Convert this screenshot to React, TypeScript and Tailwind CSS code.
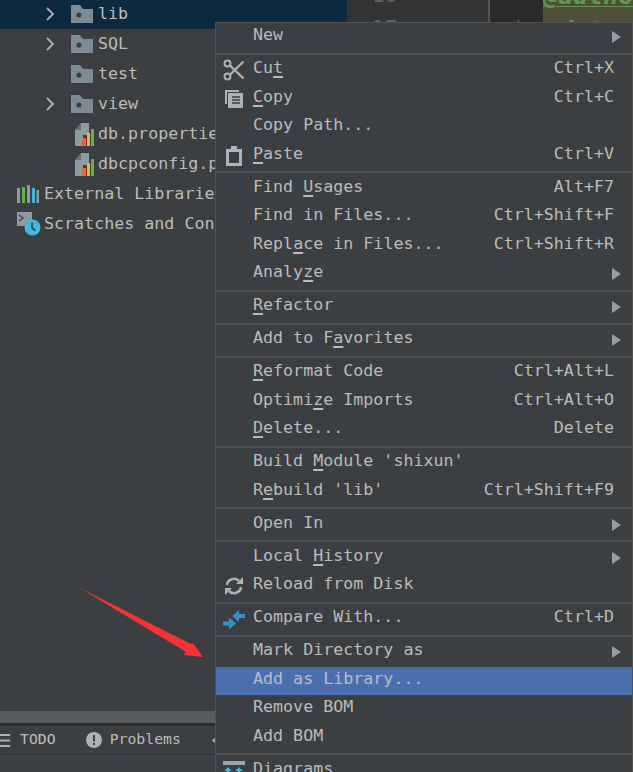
import React from "react";

const mono = "font-['DejaVu_Sans_Mono','Liberation_Mono',monospace]";

type Entry = {
  label: string;
  mn?: number;
  keys?: string;
  sub?: boolean;
  icon?: React.ReactNode;
  active?: boolean;
};

function Scissors() {
  return (
    <svg width="22" height="22" viewBox="0 0 22 22" fill="none" stroke="#afb1b3">
      <circle cx="4.500" cy="4.500" r="3" strokeWidth="2" />
      <circle cx="4.500" cy="17.500" r="3" strokeWidth="2" />
      <path d="M7 6.500L20.500 19.500M7 15.500L20.500 2.500" strokeWidth="2.400" />
    </svg>
  );
}

function CopyIcon() {
  return (
    <svg width="20" height="20" viewBox="0 0 20 20">
      <path d="M1 1h14v2H3v12H1z" fill="#afb1b3" />
      <path d="M4 4h15v15H4z" fill="#afb1b3" />
      <path d="M8 8h8M8 11h8M8 14h8" stroke="#3c3f41" strokeWidth="1.400" />
    </svg>
  );
}

function PasteIcon() {
  return (
    <svg width="18" height="20" viewBox="0 0 18 20">
      <path d="M1 3h16v17H1z" fill="#afb1b3" />
      <path d="M4 6h10v11H4z" fill="#3c3f41" />
      <path d="M6 0h6v5H6z" fill="#afb1b3" />
    </svg>
  );
}

function ReloadIcon() {
  return (
    <svg width="20" height="20" viewBox="0 0 20 20" fill="none">
      <path d="M3 9a7 7 0 0 1 12-4" stroke="#afb1b3" strokeWidth="2.600" />
      <path d="M12 8h7V1z" fill="#afb1b3" />
      <path d="M17 11a7 7 0 0 1-12 4" stroke="#afb1b3" strokeWidth="2.600" />
      <path d="M8 12H1v7z" fill="#afb1b3" />
    </svg>
  );
}

function CompareIcon() {
  return (
    <svg width="22" height="21" viewBox="0 0 22 21">
      <path d="M22 5h-6V1L9 7l7 6V9h6z" fill="#3592c4" />
      <path d="M0 12.500h6v-4l7 6-7 6v-4H0z" fill="#3592c4" />
    </svg>
  );
}

function DiagramIcon() {
  return (
    <svg width="22" height="14" viewBox="0 0 22 14" className="-mt-[6px]">
      <path d="M0 0h22v4H0z" fill="#9aa7b0" />
      <path d="M5 6l-3.500 4H4v4h2v-4h2.500zM16 6l-3.500 4H15v4h2v-4h2.500z" fill="#40b6e0" />
    </svg>
  );
}

function FolderIcon() {
  return (
    <svg width="22" height="18" viewBox="0 0 22 18">
      <path d="M0 0h9l3 4h10v14H0z" fill="#7f8b93" />
      <circle cx="8" cy="10" r="2.600" fill="#3c3f41" />
    </svg>
  );
}

function PropsIcon() {
  return (
    <svg width="20" height="23" viewBox="0 0 20 23" className="ml-[3px]">
      <path d="M1 7l6-7h8v12H9v11H1z" fill="#8f9ba3" />
      <path d="M1 7h6V0z" fill="#3c3f41" opacity="0.500" />
      <path d="M8 15h4v8H8z" fill="#f26522" />
      <path d="M13 10h3v13h-3z" fill="#f4af3d" />
      <path d="M17 6h3v17h-3z" fill="#62b543" />
    </svg>
  );
}

function LibsIcon() {
  return (
    <svg width="22" height="19" viewBox="0 0 22 19">
      <path d="M0 3h3v15H0z" fill="#8f9ba3" />
      <path d="M5 2h3v16H5z" fill="#62b543" />
      <path d="M10 0h3v18h-3z" fill="#8f9ba3" />
      <path d="M15 3h3v15h-3z" fill="#40b6e0" />
      <path d="M19.500 5h2.500v13h-2.500z" fill="#8f9ba3" />
    </svg>
  );
}

function ScratchIcon() {
  return (
    <svg width="24" height="24" viewBox="0 0 24 24">
      <path d="M0 0h15v14H0z" fill="#8f9ba3" />
      <path d="M2 3l4 3-4 3" fill="none" stroke="#3c3f41" strokeWidth="1.300" />
      <circle cx="15.500" cy="15.500" r="8" fill="#40b6e0" />
      <path d="M15 10.500v5.500l3.500 2.500" fill="none" stroke="#3c3f41" strokeWidth="1.600" />
    </svg>
  );
}

function TreeRow({
  label,
  indent,
  icon,
  chevron,
  selected,
}: {
  label: string;
  indent: string;
  icon: React.ReactNode;
  chevron?: boolean;
  selected?: boolean;
}) {
  return (
    <div className={`flex h-[30px] items-center whitespace-nowrap ${selected ? "bg-[#0d293e]" : ""} ${indent}`}>
      {chevron !== undefined && (
        <span className="flex w-[25px] shrink-0 items-center">
          {chevron && (
            <svg width="9" height="14" viewBox="0 0 9 14" fill="none">
              <path d="M1 1l6 6-6 6" stroke="#afb1b3" strokeWidth="1.800" />
            </svg>
          )}
        </span>
      )}
      <span className="flex w-[27px] shrink-0 items-center">{icon}</span>
      <span className="pb-[2px]">{label}</span>
    </div>
  );
}

const groups: Entry[][] = [
  [{ label: "New", sub: true }],
  [
    { label: "Cut", mn: 2, keys: "Ctrl+X", icon: <Scissors /> },
    { label: "Copy", mn: 0, keys: "Ctrl+C", icon: <CopyIcon /> },
    { label: "Copy Path..." },
    { label: "Paste", mn: 0, keys: "Ctrl+V", icon: <PasteIcon /> },
  ],
  [
    { label: "Find Usages", mn: 5, keys: "Alt+F7" },
    { label: "Find in Files...", keys: "Ctrl+Shift+F" },
    { label: "Replace in Files...", mn: 4, keys: "Ctrl+Shift+R" },
    { label: "Analyze", mn: 5, sub: true },
  ],
  [{ label: "Refactor", mn: 0, sub: true }],
  [{ label: "Add to Favorites", mn: 8, sub: true }],
  [
    { label: "Reformat Code", mn: 0, keys: "Ctrl+Alt+L" },
    { label: "Optimize Imports", mn: 6, keys: "Ctrl+Alt+O" },
    { label: "Delete...", mn: 0, keys: "Delete" },
  ],
  [
    { label: "Build Module 'shixun'", mn: 6 },
    { label: "Rebuild 'lib'", mn: 1, keys: "Ctrl+Shift+F9" },
  ],
  [{ label: "Open In", sub: true }],
  [
    { label: "Local History", mn: 6, sub: true },
    { label: "Reload from Disk", icon: <ReloadIcon /> },
  ],
  [{ label: "Compare With...", keys: "Ctrl+D", icon: <CompareIcon /> }],
  [
    { label: "Mark Directory as", sub: true },
    { label: "Add as Library...", active: true },
    { label: "Remove BOM" },
    { label: "Add BOM" },
  ],
  [{ label: "Diagrams", icon: <DiagramIcon /> }],
];

function Label({ text, mn }: { text: string; mn?: number }) {
  if (mn === undefined) return <span>{text}</span>;
  return (
    <span>
      {text.slice(0, mn)}
      <span className="underline decoration-2 underline-offset-[3px]">{text[mn]}</span>
      {text.slice(mn + 1)}
    </span>
  );
}

function MenuRow({ entry }: { entry: Entry }) {
  return (
    <div
      className={`relative flex h-[28.5px] items-center whitespace-nowrap pb-[5px] pl-[37px] pr-[18px] ${
        entry.active ? "bg-[#4b6eaf]" : ""
      }`}
    >
      {entry.icon && (
        <span className="absolute left-[6px] top-0 flex h-full w-[24px] items-center justify-center">{entry.icon}</span>
      )}
      <Label text={entry.label} mn={entry.mn} />
      {entry.keys && <span className="ml-auto">{entry.keys}</span>}
      {entry.sub && (
        <svg width="9" height="12" viewBox="0 0 9 12" className="absolute right-[11px] top-[8px]">
          <path d="M0 0l9 6-9 6z" fill="#9a9c9e" />
        </svg>
      )}
    </div>
  );
}

export default function App() {
  return (
    <div className={`relative flex h-[772px] w-[633px] flex-col overflow-hidden bg-[#3c3f41] text-[16.67px] text-[#bbbbbb] ${mono}`}>
      {/* project tree + editor behind the menu */}
      <div className="flex h-[711px] shrink-0">
        <div className="w-[347px] shrink-0 -mt-px">
          <TreeRow label="lib" indent="pl-[46px]" chevron selected icon={<FolderIcon />} />
          <TreeRow label="SQL" indent="pl-[46px]" chevron icon={<FolderIcon />} />
          <TreeRow label="test" indent="pl-[46px]" chevron={false} icon={<FolderIcon />} />
          <TreeRow label="view" indent="pl-[46px]" chevron icon={<FolderIcon />} />
          <TreeRow label="db.properties" indent="pl-[71px]" icon={<PropsIcon />} />
          <TreeRow label="dbcpconfig.properties" indent="pl-[71px]" icon={<PropsIcon />} />
          <TreeRow label="External Libraries" indent="pl-[17px]" icon={<LibsIcon />} />
          <TreeRow label="Scratches and Consoles" indent="pl-[17px]" icon={<ScratchIcon />} />
        </div>
        <div className="h-[22px] w-[141px] shrink-0 overflow-hidden bg-[#313335] pl-[25px] text-[21px] text-[#606366]">
          <div className="-mt-[20px] leading-[30px]">16</div>
          <div className="mt-[4px] leading-[30px]">17</div>
        </div>
        <div className="h-[22px] w-[55px] shrink-0 overflow-hidden border-l-2 border-[#555555] bg-[#2b2b2b] pl-[22px] text-[21px] leading-[30px] text-[#62803f]">
          <div className="mt-[14px]">*</div>
        </div>
        <div className="h-[22px] flex-1 overflow-hidden bg-[#4f4f3a] text-[25px] font-bold italic text-[#629755]">
          <div className="-mt-[19px] leading-[30px] underline decoration-1 underline-offset-[2px]">@author</div>
          <div className="mt-[5px] leading-[30px]">@date</div>
        </div>
      </div>

      <div className="h-[12px] shrink-0 bg-[#595b5d]" />
      <div className="h-[3px] shrink-0 bg-[#2b2b2b]" />
      <div className="flex h-[29px] shrink-0 items-center border-b border-[#323232] text-[14.8px]">
        <svg width="10" height="13" viewBox="0 0 10 13" className="shrink-0">
          <path d="M0 1h10M0 6.500h10M0 12h10" stroke="#afb1b3" strokeWidth="2.200" />
        </svg>
        <span className="ml-[10px] pb-[2px]">TODO</span>
        <svg width="16" height="16" viewBox="0 0 16 16" className="ml-[30px] shrink-0">
          <circle cx="8" cy="8" r="8" fill="#afb1b3" />
          <path d="M7 3h2v6.500H7zM7 11h2v2H7z" fill="#3c3f41" />
        </svg>
        <span className="ml-[8px] pb-[2px]">Problems</span>
        <svg width="4" height="7" viewBox="0 0 4 7" className="ml-[31px] shrink-0">
          <path d="M4 0v7L0 3.500z" fill="#afb1b3" />
        </svg>
      </div>
      <div className="flex-1" />

      {/* context menu */}
      <div className="absolute left-[215px] right-0 top-[22px] border border-[#515151] bg-[#3c3f41]">
        {groups.map((group, i) => (
          <div key={i}>
            {i > 0 && (
              <div className="flex h-[4.5px] items-center">
                <div className="h-[2px] w-full bg-[#515151]" />
              </div>
            )}
            {group.map((entry) => (
              <MenuRow key={entry.label} entry={entry} />
            ))}
          </div>
        ))}
      </div>

      {/* red annotation arrow */}
      <svg width="633" height="772" viewBox="0 0 633 772" className="pointer-events-none absolute left-0 top-0">
        <path d="M80 588L191 644L193 643L203 657L184 655L186 652z" fill="#f53333" />
      </svg>
    </div>
  );
}
